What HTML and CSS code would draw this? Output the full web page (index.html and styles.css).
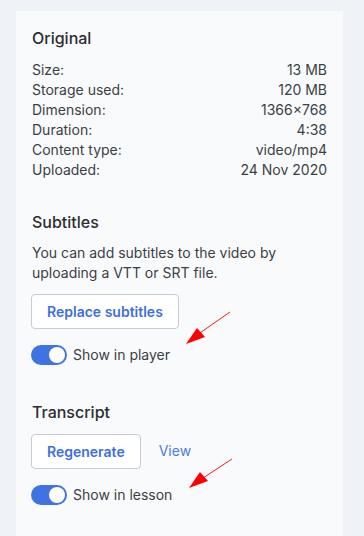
FILE: index.html
```html
<!DOCTYPE html>
<html lang="en">
<head>
    <meta charset="UTF-8">
    <meta name="viewport" content="width=device-width, initial-scale=1.0">
    <title>Video details</title>
    <link rel="stylesheet" href="styles.css">
</head>
<body>
    <div class="panel">
        <section class="section">
            <h2 class="section-title">Original</h2>
            <div class="meta-row"><span>Size:</span><span>13 MB</span></div>
            <div class="meta-row"><span>Storage used:</span><span>120 MB</span></div>
            <div class="meta-row"><span>Dimension:</span><span>1366×768</span></div>
            <div class="meta-row"><span>Duration:</span><span>4:38</span></div>
            <div class="meta-row"><span>Content type:</span><span>video/mp4</span></div>
            <div class="meta-row"><span>Uploaded:</span><span>24 Nov 2020</span></div>
        </section>

        <section class="section subtitles">
            <h2 class="section-title">Subtitles</h2>
            <p class="section-text">You can add subtitles to the video by uploading a VTT or SRT file.</p>
            <div class="actions">
                <button class="btn">Replace subtitles</button>
            </div>
            <label class="toggle-row">
                <span class="toggle"><span class="toggle-knob"></span></span>
                Show in player
            </label>
        </section>

        <section class="section transcript">
            <h2 class="section-title">Transcript</h2>
            <div class="actions">
                <button class="btn">Regenerate</button>
                <a class="link" href="#">View</a>
            </div>
            <label class="toggle-row">
                <span class="toggle"><span class="toggle-knob"></span></span>
                Show in lesson
            </label>
        </section>
    </div>

    <!-- annotation arrows -->
    <svg class="annotations" width="364" height="536" viewBox="0 0 364 536">
        <line x1="230" y1="312" x2="197" y2="335" stroke="#ff1a1a" stroke-width="1"/>
        <polygon points="186,344 197,328 205,337" fill="#ff0000"/>
        <line x1="232" y1="459" x2="200" y2="480" stroke="#ff1a1a" stroke-width="1"/>
        <polygon points="189,488 200,472 208,481" fill="#ff0000"/>
    </svg>
</body>
</html>
```

FILE: styles.css
```css
* {
    margin: 0;
    padding: 0;
    box-sizing: border-box;
}

body {
    font-family: Inter, 'Noto Sans', sans-serif;
    background: #eff3f8;
    color: #3b3f46;
    position: relative;
    padding-top: 11px;
    min-height: 100vh;
    display: flex;
    flex-direction: column;
}

.panel {
    flex: 1;
    margin: 0 21px 0 16px;
    background: #f9fafb;
    padding: 15px 16px 20px 15px;
}

.section-title {
    font-size: 16px;
    font-weight: 500;
    line-height: 24px;
    color: #2b2d31;
    margin-bottom: 10px;
}

.meta-row {
    display: flex;
    justify-content: space-between;
    font-size: 14px;
    line-height: 20px;
    padding-left: 1px;
}

.subtitles {
    margin-top: 30px;
}

.transcript {
    margin-top: 35px;
}

.section-title,
.section-text {
    padding-left: 1px;
}

.section-text {
    font-size: 14px;
    line-height: 20px;
    margin-top: -1px;
    margin-bottom: 11px;
}

.actions {
    display: flex;
    align-items: center;
    gap: 18px;
}

.btn {
    height: 35px;
    padding: 0 15px;
    background: #fff;
    border: 1px solid #c6cbd5;
    border-radius: 4px;
    font-family: inherit;
    font-size: 14px;
    font-weight: 600;
    color: #3e6fe0;
    cursor: pointer;
}

.link {
    font-size: 14px;
    color: #4a7be6;
    text-decoration: none;
    margin-top: -2px;
}

.toggle-row {
    display: flex;
    align-items: center;
    gap: 6px;
    margin-top: 16px;
    font-size: 14px;
    line-height: 20px;
}

.toggle {
    width: 36px;
    height: 20px;
    border-radius: 10px;
    background: #3f73e3;
    display: flex;
    align-items: center;
    justify-content: flex-end;
    padding: 2px;
}

.toggle-knob {
    width: 16px;
    height: 16px;
    border-radius: 50%;
    background: #fff;
}

.annotations {
    position: absolute;
    top: 0;
    left: 0;
    pointer-events: none;
}
```
